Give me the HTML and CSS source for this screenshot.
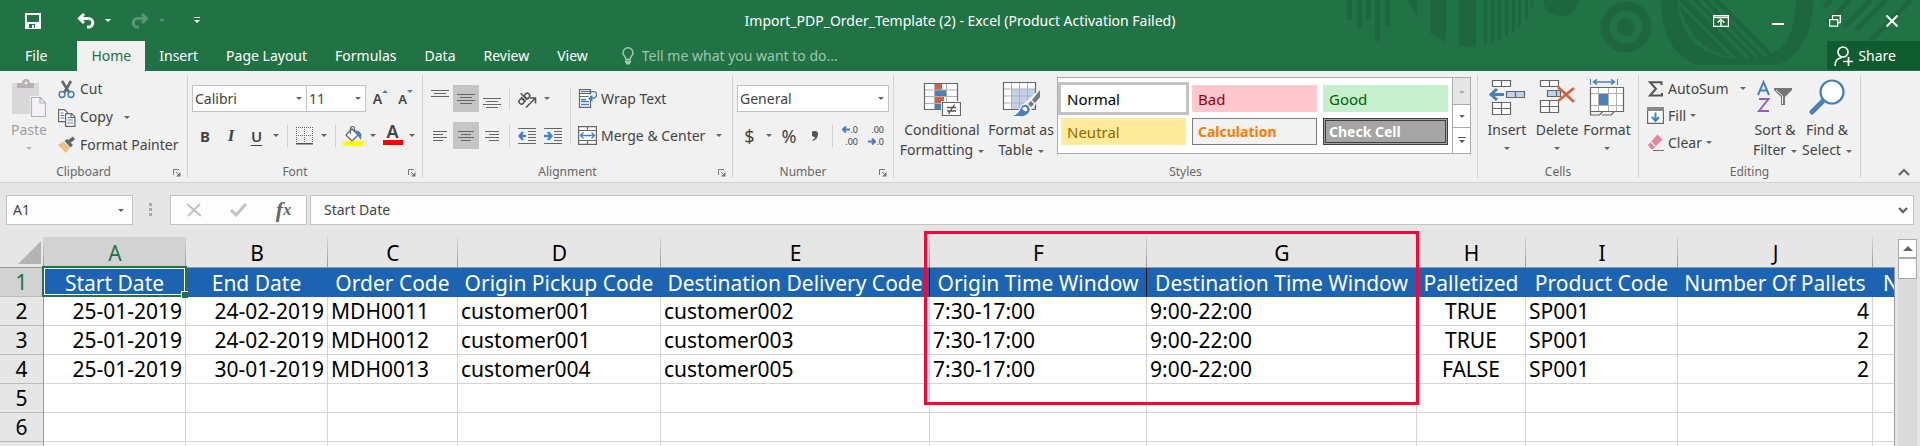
FILE: index.html
```html
<!DOCTYPE html>
<html lang="en">
<head>
<meta charset="utf-8">
<title>Import_PDP_Order_Template (2) - Excel</title>
<link rel="stylesheet" href="styles.css">
</head>
<body>
<header class="top">
  <svg class="pattern" width="580" height="71" viewBox="0 0 580 71" aria-hidden="true">
    <g fill="#1e663e">
      <path d="M7 0h5v20H7zM17 0h5v29h-5zM26 0h5v20h-5zM35 0h5v41h-5zM45 0h5v26h-5z"/>
      <path d="M68 0h9v18Q71 9 68 0zM90 0h16v42Q97 38 90 33zM119 0h17v47q-9 0-17-1zM144 0h3v45l-3 1zM151 0h3v43l-3 1zM158 0h3v40l-3 1zM165 0h3v36l-3 2zM172 0h3v31l-3 2zM178 0h3v25l-3 3zM185 0h3v17l-3 4zM191 0h3v4l-3 6z"/>
      <path d="M203 0h36q-3 16-18 16T203 0z"/>
      <circle cx="286" cy="27" r="9"/>
      <path d="M321 0q0 50 35 65h82q35-15 35-65h-17q0 59-50 59Q340 59 338 0z"/>
      <path d="M340 8V0h39l53 53q-9 5-18 6h-10Q354 56 340 8z"/>
    </g>
    <circle cx="286" cy="27" r="21" fill="none" stroke="#1e663e" stroke-width="9"/>
    <path d="M338 2l57 57M350 0l58 58M360 0l57 57M370 0l56 56" stroke="#217346" stroke-width="3"/>
    <path d="M484 7l7-7M487 23l23-23M504 27l27-27M516 30l30-30M530 41l41-41" stroke="#1e663e" stroke-width="5"/>
  </svg>
  <div class="titlebar">
    <div class="qat">
      <button class="q-save" aria-label="Save"><svg width="16" height="16" viewBox="0 0 16 16"><path d="M0 0h16v16H0zM2 2v7h12V2zM4 11v4h3v-3h2v3h1v-4z" fill="#fff" fill-rule="evenodd"/></svg></button>
      <button class="q-btn" aria-label="Undo"><svg width="18" height="16" viewBox="0 0 18 16"><path d="M7 1L2.500 5.500 7 10M3 5.500h8.500a4.300 4.300 0 0 1 0 8.600H10" fill="none" stroke="#fff" stroke-width="3"/></svg></button>
      <button class="q-caret" aria-label="Undo list"><i class="caret light"></i></button>
      <button class="q-btn faded" aria-label="Redo"><svg width="18" height="16" viewBox="0 0 18 16"><path d="M11 1l4.500 4.500L11 10M15 5.500H6.500a4.300 4.300 0 0 0 0 8.600H8" fill="none" stroke="#fff" stroke-width="3"/></svg></button>
      <button class="q-caret faded" aria-label="Redo list"><i class="caret light"></i></button>
      <button class="q-more" aria-label="Customize Quick Access Toolbar"><svg width="6" height="7" viewBox="0 0 6 7"><path d="M0 0h6v1H0zM0 3h6L3 6z" fill="#fff"/></svg></button>
    </div>
    <h1 class="title">Import_PDP_Order_Template (2) - Excel (Product Activation Failed)</h1>
    <div class="winctl">
      <button aria-label="Ribbon Display Options"><svg width="16" height="12" viewBox="0 0 16 12"><path d="M.5.5h15v11H.5zM0 2.500h16M8 11V5M4.500 7.500L8 4.500l3.500 3" fill="none" stroke="#fff" stroke-width="1.400"/></svg></button>
      <button aria-label="Minimize"><svg width="12" height="12" viewBox="0 0 12 12"><path d="M0 8h12v2H0z" fill="#fff"/></svg></button>
      <button aria-label="Restore Down"><svg width="12" height="12" viewBox="0 0 12 12"><path d="M.7 4.700h8v6.500h-8zM3.500 4.500V.700h7.800v7H9" fill="none" stroke="#fff" stroke-width="1.300"/></svg></button>
      <button aria-label="Close"><svg width="12" height="12" viewBox="0 0 12 12"><path d="M.5.500l11 11M11.500.500l-11 11" stroke="#fff" stroke-width="2"/></svg></button>
    </div>
  </div>
  <nav class="tabs">
    <a class="tab file" href="#file">File</a>
    <a class="tab active" href="#home">Home</a>
    <a class="tab" href="#insert">Insert</a>
    <a class="tab" href="#layout">Page Layout</a>
    <a class="tab" href="#formulas">Formulas</a>
    <a class="tab" href="#data">Data</a>
    <a class="tab" href="#review">Review</a>
    <a class="tab" href="#view">View</a>
    <label class="tell">
      <svg width="12" height="18" viewBox="0 0 12 18"><path d="M4 12.500C4 9.500 1 9 1 5.800a5 5 0 0 1 10 0C11 9 8 9.500 8 12.500z" fill="none" stroke="#9fc6ae" stroke-width="1.600"/><path d="M3 13.500h6V16H8v1.500H4V16H3z" fill="#9fc6ae"/></svg>
      <input type="text" placeholder="Tell me what you want to do..." aria-label="Tell me what you want to do">
    </label>
    <button class="share"><svg width="20" height="20" viewBox="0 0 20 20" fill="none" stroke="#fff" stroke-width="1.700"><circle cx="9" cy="6" r="5"/><path d="M1 20c0-5 2.500-8 7-8.500M9 15.500h10M14.500 11v9"/></svg>Share</button>
  </nav>
</header>

<section class="ribbon">
  <div class="group clipboard">
    <div class="body">
      <button class="big paste" disabled>
        <svg width="34" height="38" viewBox="0 0 34 38"><path d="M0 4h27v31H0z" fill="#dbd8db"/><path d="M5 9V4h5q0-4 4-4t4 4h4v5z" fill="#b5b1b5"/><circle cx="14" cy="4" r="1.500" fill="#f1f1f1"/><path d="M18 17h17v22H18z" fill="#f1f1f1"/><path d="M19.500 18.500h9l5 5.500v13.500h-14zM28 18.500V24h5.500" fill="#f5f1f8" stroke="#b5b1b5" stroke-width="1.200"/></svg>
        <span>Paste</span><i class="caret"></i>
      </button>
      <div class="stack pitch28">
        <button class="cmd"><svg width="18" height="20" viewBox="0 0 18 20"><path d="M4 2l7.500 12M13 2L6 14" stroke="#666" stroke-width="2.600"/><circle cx="4" cy="15.500" r="2.900" fill="none" stroke="#4a80ba" stroke-width="1.500"/><circle cx="13" cy="15.500" r="2.900" fill="none" stroke="#4a80ba" stroke-width="1.500"/></svg>Cut</button>
        <button class="cmd"><svg width="18" height="19" viewBox="0 0 18 19"><path d="M.600 1.600h6l3 3v9h-9z" fill="#fff" stroke="#666" stroke-width="1.200"/><path d="M2.500 5h3M2.500 7.500h4M2.500 10h4" stroke="#4a80ba"/><path d="M7.600 5.600h6l3.300 3.300v9.500H7.600zM13 6v3.500h3.500" fill="#fff" stroke="#666" stroke-width="1.200"/><path d="M9.500 9.500h2.500M9.500 12h5.500M9.500 15h5.500" stroke="#4a80ba"/></svg>Copy<i class="caret far"></i></button>
        <button class="cmd"><svg width="18" height="18" viewBox="0 0 18 18"><path d="M0 9l5-3.500 7 6L8 17z" fill="#eac282"/><path d="M6.500 5l2.500-2 6 6-2.500 2.500z" fill="#666"/><path d="M10.500 6l5.500-4" stroke="#666" stroke-width="3.500"/></svg>Format Painter</button>
      </div>
    </div>
    <div class="glabel">Clipboard<button class="launch" aria-label="Clipboard settings"><svg width="8" height="8" viewBox="0 0 8 8"><path d="M.5 6V.500H6M3 3l3 3" fill="none" stroke="#777"/><path d="M7.500 3v4.500H3z" fill="#777"/></svg></button></div>
  </div>

  <div class="group font">
    <div class="body rows">
      <div class="row">
        <select class="combo fontname" aria-label="Font"><option>Calibri</option></select><select class="combo fontsize" aria-label="Font size"><option>11</option></select>
        <button class="tool w25 grow" aria-label="Increase Font Size">A<svg width="6" height="3" viewBox="0 0 6 3"><path d="M0 3l3-3 3 3z" fill="#4a80ba"/></svg></button>
        <button class="tool w25 shrink" aria-label="Decrease Font Size">A<svg width="6" height="3" viewBox="0 0 6 3"><path d="M0 0h6L3 3z" fill="#4a80ba"/></svg></button>
      </div>
      <div class="row">
        <button class="tool w26 bold">B</button>
        <button class="tool w26 italic">I</button>
        <button class="tool w25 under">U</button>
        <button class="tool w14" aria-label="Underline styles"><i class="caret"></i></button>
        <i class="vsep"></i>
        <button class="tool w25" aria-label="Borders"><svg width="17" height="18" viewBox="0 0 17 18"><path d="M0 .5h17M.5 0v16M16.500 0v16M8.500 0v16M0 8.500h17" fill="none" stroke="#666" stroke-dasharray="1 1"/><path d="M0 16h17v1.500H0z" fill="#555"/></svg></button>
        <button class="tool w14" aria-label="Border styles"><i class="caret"></i></button>
        <i class="vsep"></i>
        <button class="tool w26" aria-label="Fill Color"><svg width="20" height="20" viewBox="0 0 20 20"><path d="M3 9l6-6 6 6-6 6z" fill="#fff" stroke="#666" stroke-width="1.300"/><path d="M7.500 8V2.500q0-2 2-2t2 2V5" fill="none" stroke="#666" stroke-width="1.200"/><path d="M12 4q6 1 6.500 5l-.5 5-3-4z" fill="#4a80ba"/><path d="M0 15h20v5H0z" fill="#ff0"/></svg></button>
        <button class="tool w14" aria-label="Fill colors"><i class="caret"></i></button>
        <button class="tool w25 fcolor" aria-label="Font Color">A</button>
        <button class="tool w14" aria-label="Font colors"><i class="caret"></i></button>
      </div>
    </div>
    <div class="glabel">Font<button class="launch" aria-label="Font settings"><svg width="8" height="8" viewBox="0 0 8 8"><path d="M.5 6V.500H6M3 3l3 3" fill="none" stroke="#777"/><path d="M7.500 3v4.500H3z" fill="#777"/></svg></button></div>
  </div>

  <div class="group align">
    <div class="body">
      <div class="rows">
        <div class="row">
          <button class="tool w26" aria-label="Top Align"><svg width="18" height="18" viewBox="0 0 18 18" stroke="#666"><path d="M0 .5h18M3 3.500h12M0 6.500h18"/></svg></button>
          <button class="tool w26 on" aria-label="Middle Align"><svg width="18" height="18" viewBox="0 0 18 18" stroke="#666"><path d="M0 4.500h18M3 7.500h12M0 10.500h18M3 13.500h12"/></svg></button>
          <button class="tool w26" aria-label="Bottom Align"><svg width="18" height="18" viewBox="0 0 18 18" stroke="#666"><path d="M0 8.500h18M3 11.500h12M0 14.500h18M3 17.500h12"/></svg></button>
          <i class="vsep"></i>
          <button class="tool w26" aria-label="Orientation"><svg width="20" height="20" viewBox="0 0 20 20" fill="none" stroke="#555" stroke-width="1.600"><g transform="rotate(-45 7 10)"><circle cx="3.500" cy="10" r="2.500"/><path d="M6.300 6.500v6.500"/><circle cx="11.500" cy="10" r="2.500"/><path d="M8.700 3.500v9.500"/></g><path d="M9 18.500l9-9M13 9h5.500v5.500"/></svg></button>
          <button class="tool w14" aria-label="Orientation options"><i class="caret"></i></button>
        </div>
        <div class="row">
          <button class="tool w26" aria-label="Align Left"><svg width="14" height="12" viewBox="0 0 14 12" stroke="#666"><path d="M0 1.500h14M0 4.500h10M0 7.500h14M0 10.500h10"/></svg></button>
          <button class="tool w26 on" aria-label="Center"><svg width="16" height="12" viewBox="0 0 16 12" stroke="#666"><path d="M0 1.500h16M3 4.500h10M0 7.500h16M3 10.500h10"/></svg></button>
          <button class="tool w26" aria-label="Align Right"><svg width="14" height="12" viewBox="0 0 14 12" stroke="#666"><path d="M0 1.500h14M4 4.500h10M0 7.500h14M4 10.500h10"/></svg></button>
          <i class="vsep"></i>
          <button class="tool w26" aria-label="Decrease Indent"><svg width="18" height="16" viewBox="0 0 18 16"><path d="M0 .5h18M10 3.500h8M10 6.500h8M10 9.500h8M10 12.500h8M0 15.500h18" stroke="#666"/><path d="M8 8H2M5 4L1.500 8 5 12" fill="none" stroke="#4a80ba" stroke-width="2.400"/></svg></button>
          <button class="tool w26" aria-label="Increase Indent"><svg width="18" height="16" viewBox="0 0 18 16"><path d="M0 .5h18M10 3.500h8M10 6.500h8M10 9.500h8M10 12.500h8M0 15.500h18" stroke="#666"/><path d="M0 8h6M4 4l3.500 4L4 12" fill="none" stroke="#4a80ba" stroke-width="2.400"/></svg></button>
        </div>
      </div>
      <i class="vsep tall"></i>
      <div class="rows wide">
        <div class="row"><button class="cmd"><svg width="19" height="19" viewBox="0 0 19 19"><path d="M1.500.600h11v3.900h-11zM12.500 7v11.400h-11V4.500M1.500 7.500h9" fill="#fff" stroke="#666" stroke-width="1.200"/><path d="M3 2.600h13q2.500 0 2.500 3T16 9h-3M3 10.500h5M3 12.500h8M3 15.500h8" fill="none" stroke="#4a80ba" stroke-width="1.300"/><path d="M10 9.500l4.500-3.500v7z" fill="#4a80ba"/></svg>Wrap Text</button></div>
        <div class="row"><button class="cmd"><svg width="19" height="19" viewBox="0 0 19 19"><path d="M.600.600h17.800v17.800H.600zM.600 4.500h17.800M.600 14.500h17.800M9.500.600v3.900M9.500 14.500v3.900" fill="#fff" stroke="#666" stroke-width="1.200"/><path d="M3 9.500h13M5.500 6.500l-3 3 3 3M13.500 6.500l3 3-3 3" fill="none" stroke="#4a80ba" stroke-width="1.400"/></svg>Merge &amp; Center<i class="caret far"></i></button></div>
      </div>
    </div>
    <div class="glabel">Alignment<button class="launch" aria-label="Alignment settings"><svg width="8" height="8" viewBox="0 0 8 8"><path d="M.5 6V.500H6M3 3l3 3" fill="none" stroke="#777"/><path d="M7.500 3v4.500H3z" fill="#777"/></svg></button></div>
  </div>

  <div class="group number">
    <div class="body rows">
      <div class="row"><select class="combo numfmt" aria-label="Number format"><option>General</option></select></div>
      <div class="row">
        <button class="tool w25 sym">$</button>
        <button class="tool w14" aria-label="Currency formats"><i class="caret"></i></button>
        <button class="tool w26 sym">%</button>
        <button class="tool w26" aria-label="Comma Style"><svg width="6" height="10" viewBox="0 0 6 10"><path d="M3 0a3 3 0 0 1 3 3q0 5-5 7l-.500-1Q3 8 3.200 5.800A3 3 0 1 1 3 0z" fill="#555"/></svg></button>
        <i class="vsep"></i>
        <button class="tool w26 dec" aria-label="Increase Decimal"><span><svg width="8" height="7" viewBox="0 0 8 7"><path d="M8 3.500H2M4 .500l-3 3 3 3" fill="none" stroke="#4a80ba" stroke-width="2"/></svg>.0</span><span>.00</span></button>
        <button class="tool w26 dec" aria-label="Decrease Decimal"><span>.00</span><span><svg width="8" height="7" viewBox="0 0 8 7"><path d="M0 3.500h6M4 .500l3 3-3 3" fill="none" stroke="#4a80ba" stroke-width="2"/></svg>.0</span></button>
      </div>
    </div>
    <div class="glabel">Number<button class="launch" aria-label="Number settings"><svg width="8" height="8" viewBox="0 0 8 8"><path d="M.5 6V.500H6M3 3l3 3" fill="none" stroke="#777"/><path d="M7.500 3v4.500H3z" fill="#777"/></svg></button></div>
  </div>

  <div class="group styles">
    <div class="body">
      <button class="big cond">
        <svg width="38" height="38" viewBox="0 0 38 38"><path d="M1 4h34v27H1z" fill="#fff"/><path d="M11 4h8v7h-8zM11 18h10v6H11z" fill="#d9603f"/><path d="M11 11h12v7H11zM11 24h7v7h-7z" fill="#4a80ba"/><path d="M11.500 4v27M23.500 4v27M1 11h34M1 17.500h34M1 24.500h34" stroke="#b1b1b1" fill="none"/><path d="M1.500 4.500h33v26h-33z" fill="none" stroke="#666" stroke-width="1.200"/><path d="M18 22h20v16H18z" fill="#f1f1f1"/><path d="M19.500 23.500h18v13h-18z" fill="#fff" stroke="#666" stroke-width="1.200"/><path d="M24 28.500h9M24 32h9M31.500 25.500l-6 9.500" stroke="#555" stroke-width="1.300"/></svg>
        <span>Conditional</span><span>Formatting<i class="caret near"></i></span>
      </button>
      <button class="big fmt">
        <svg width="38" height="38" viewBox="0 0 38 38"><path d="M1 3h32v28H1z" fill="#fff"/><path d="M9 10h24v21H9z" fill="#c0d3e9"/><path d="M9.500 3v28M17.500 3v28M25.500 3v28M1 10h32M1 17h32M1 24h32" stroke="#b1b1b1" fill="none"/><path d="M1.500 3.500h32v27h-32z" fill="none" stroke="#666" stroke-width="1.200"/><path d="M38 10L20 26l-9 12h12l7-8 8-10z" fill="#f1f1f1"/><path d="M38 11v7l-5 6-3-3zM29 22l3 3-3 3-3-3z" fill="#777"/><path d="M11 37q6-2 8-8 2-4 6-3 4 3 2 7-3 5-10 4z" fill="#4a80ba"/><path d="M20 30q3-4 5-1 1 4-2 3" fill="#fff"/></svg>
        <span>Format as</span><span>Table<i class="caret near"></i></span>
      </button>
      <div class="gallery">
        <div class="swatches">
          <button class="sw normal">Normal</button><button class="sw bad">Bad</button><button class="sw good">Good</button>
          <button class="sw neutral">Neutral</button><button class="sw calc">Calculation</button><button class="sw check">Check Cell</button>
        </div>
        <div class="gscroll">
          <button disabled aria-label="Previous row"><i class="caret up"></i></button>
          <button aria-label="Next row"><i class="caret"></i></button>
          <button aria-label="More styles"><svg width="8" height="7" viewBox="0 0 8 7"><path d="M0 0h8v1H0zM1 3h6L4 6z" fill="#555"/></svg></button>
        </div>
      </div>
    </div>
    <div class="glabel">Styles</div>
  </div>

  <div class="group cells">
    <div class="body">
      <button class="big w50">
        <svg width="38" height="38" viewBox="0 0 38 38"><path d="M4.500 1.500h18v6h-18zM13.500 1.500v6M4.500 23.500h18v12h-18zM13.500 23.500v12M4.500 29.500h18" fill="#fff" stroke="#666" stroke-width="1.200"/><path d="M18.500 12.500h18v6h-18zM27.500 12.500v6" fill="#c0d3e9" stroke="#666" stroke-width="1.200"/><path d="M16 15.500H3M9 10l-6 5.500L9 21" fill="none" stroke="#4a80ba" stroke-width="3"/></svg>
        <span>Insert</span><i class="caret"></i>
      </button>
      <button class="big w50">
        <svg width="38" height="38" viewBox="0 0 38 38"><path d="M2.500 1.500h18v6h-18zM11.500 1.500v6M2.500 21.500h18v12h-18zM11.500 21.500v12M2.500 27.500h18" fill="#fff" stroke="#666" stroke-width="1.200"/><path d="M9.500 11.500h13v6h-13zM18.500 11.500v6" fill="#c0d3e9" stroke="#666" stroke-width="1.200"/><path d="M20 8l16 15M36 9L20 22" stroke="#d9603f" stroke-width="2.600"/></svg>
        <span>Delete</span><i class="caret"></i>
      </button>
      <button class="big w50">
        <svg width="38" height="38" viewBox="0 0 38 38"><path d="M2.500 0v6M29.500 0v6" stroke="#4a80ba"/><path d="M6 3h20M9 .500L5.500 3 9 5.500M23 .500L26.500 3 23 5.500" fill="none" stroke="#4a80ba" stroke-width="1.500"/><path d="M2.500 8.500h33v24h-33z" fill="#fff"/><path d="M10.500 8v24M20.500 8v24M28.500 8v24M2 14.500h33M2 26.500h33" stroke="#b1b1b1"/><path d="M11 15h9v11h-9z" fill="#4a80ba"/><path d="M2.500 8.500h33v24h-33zM2.500 33v3h9l3-3M14 36h9l3-3" fill="none" stroke="#666" stroke-width="1.200"/></svg>
        <span>Format</span><i class="caret"></i>
      </button>
    </div>
    <div class="glabel">Cells</div>
  </div>

  <div class="group editing">
    <div class="body">
      <div class="stack pitch27">
        <button class="cmd"><svg width="17" height="16" viewBox="0 0 17 16"><path d="M14.500 4V1.200H3l6 6.500L3 14.600h12V12" fill="none" stroke="#555" stroke-width="2"/></svg>AutoSum<i class="caret far"></i></button>
        <button class="cmd"><svg width="17" height="17" viewBox="0 0 17 17"><path d="M.600.600h15.800v15.800H.600z" fill="#fff" stroke="#666" stroke-width="1.200"/><path d="M0 0h17v4H0z" fill="#888"/><path d="M8.500 5.500v8M5 10l3.500 4 3.500-4" fill="none" stroke="#4a80ba" stroke-width="2"/></svg>Fill<i class="caret"></i></button>
        <button class="cmd"><svg width="17" height="17" viewBox="0 0 17 17"><path d="M10.500.500l5 5L6 15H4l-3-4z" fill="#e5849a"/><path d="M3.500 7.500l5 5" stroke="#f1f1f1" stroke-width="1.300"/><path d="M6 16.500h11" stroke="#777"/></svg>Clear<i class="caret"></i></button>
      </div>
      <button class="big w54">
        <svg width="38" height="38" viewBox="0 0 38 38"><path d="M2 16L7.500 3 13 16M4 11.500h7" fill="none" stroke="#4a80ba" stroke-width="2"/><path d="M3 20h9.500L3 32h10" fill="none" stroke="#9762b5" stroke-width="2"/><path d="M18 9h18v2l-7 7v8h-4v-8l-7-7z" fill="#777"/><path d="M20 11l6.500 6v8" fill="none" stroke="#eee"/></svg>
        <span>Sort &amp;</span><span>Filter<i class="caret near"></i></span>
      </button>
      <button class="big w50">
        <svg width="38" height="38" viewBox="0 0 38 38"><path d="M15 22L4 33" stroke="#4a80ba" stroke-width="5" stroke-linecap="round"/><circle cx="24" cy="13" r="11.500" fill="#fff" stroke="#4a80ba" stroke-width="2.200"/></svg>
        <span>Find &amp;</span><span>Select<i class="caret near"></i></span>
      </button>
    </div>
    <div class="glabel">Editing</div>
  </div>
  <button class="collapse" aria-label="Collapse the Ribbon"><svg width="12" height="8" viewBox="0 0 12 8"><path d="M1 7l5-5 5 5" fill="none" stroke="#666" stroke-width="2"/></svg></button>
</section>

<section class="fbar">
  <select class="combo namebox" aria-label="Name Box"><option>A1</option></select>
  <svg class="dots" width="4" height="14" viewBox="0 0 4 14"><path d="M0 0h3v3H0zM0 5h3v3H0zM0 10h3v3H0z" fill="#aaa"/></svg>
  <div class="fbtns">
    <button aria-label="Cancel"><svg width="16" height="14" viewBox="0 0 16 14"><path d="M1 1l14 12M14 1L2 13" stroke="#c3c3c3" stroke-width="2"/></svg></button>
    <button aria-label="Enter"><svg width="17" height="14" viewBox="0 0 17 14"><path d="M1 7l5 5L16 1" fill="none" stroke="#c3c3c3" stroke-width="3"/></svg></button>
    <button class="fx" aria-label="Insert Function">f<small>x</small></button>
  </div>
  <label class="formula"><input type="text" value="Start Date" aria-label="Formula"><svg width="10" height="7" viewBox="0 0 10 7"><path d="M1 1l4 4 4-4" fill="none" stroke="#666" stroke-width="2.400"/></svg></label>
</section>

<main class="workbook">
  <div class="sheet">
    <table class="grid">
      <colgroup><col class="c-n"><col class="c-a"><col class="c-b"><col class="c-c"><col class="c-d"><col class="c-e"><col class="c-f"><col class="c-g"><col class="c-h"><col class="c-i"><col class="c-j"><col></colgroup>
      <thead><tr><td class="corner"><svg width="23" height="23" viewBox="0 0 23 23"><path d="M23 0v23H0z" fill="#b3b3b3"/></svg></td><th class="sel">A</th><th>B</th><th>C</th><th>D</th><th>E</th><th>F</th><th>G</th><th>H</th><th>I</th><th>J</th><th></th></tr></thead>
      <tbody>
        <tr class="head"><th class="sel">1</th><td class="cur">Start Date<span class="cursor"></span></td><td>End Date</td><td>Order Code</td><td>Origin Pickup Code</td><td class="dark">Destination Delivery Code</td><td class="dark">Origin Time Window</td><td>Destination Time Window</td><td>Palletized</td><td>Product Code</td><td>Number Of Pallets</td><td class="cut">N</td></tr>
        <tr><th>2</th><td class="r">25-01-2019</td><td class="r">24-02-2019</td><td>MDH0011</td><td>customer001</td><td>customer002</td><td>7:30-17:00</td><td>9:00-22:00</td><td class="m">TRUE</td><td>SP001</td><td class="r">4</td><td></td></tr>
        <tr><th>3</th><td class="r">25-01-2019</td><td class="r">24-02-2019</td><td>MDH0012</td><td>customer001</td><td>customer003</td><td>7:30-17:00</td><td>9:00-22:00</td><td class="m">TRUE</td><td>SP001</td><td class="r">2</td><td></td></tr>
        <tr><th>4</th><td class="r">25-01-2019</td><td class="r">30-01-2019</td><td>MDH0013</td><td>customer004</td><td>customer005</td><td>7:30-17:00</td><td>9:00-22:00</td><td class="m">FALSE</td><td>SP001</td><td class="r">2</td><td></td></tr>
        <tr><th>5</th><td></td><td></td><td></td><td></td><td></td><td></td><td></td><td></td><td></td><td></td><td></td></tr>
        <tr><th>6</th><td></td><td></td><td></td><td></td><td></td><td></td><td></td><td></td><td></td><td></td><td></td></tr>
        <tr><th></th><td></td><td></td><td></td><td></td><td></td><td></td><td></td><td></td><td></td><td></td><td></td></tr>
      </tbody>
    </table>
  </div>
  <div class="vscroll"><button aria-label="Scroll up"><i class="caret up big-up"></i></button><div class="thumb"></div></div>
  <div class="marker"></div>
</main>
</body>
</html>
```
FILE: styles.css
```css
* { box-sizing: border-box; }
html, body { height: 100%; }
body {
  margin: 0;
  display: flex;
  flex-direction: column;
  overflow: hidden;
  background: #e6e6e6;
  color: #444;
  font: 14px/20px "Noto Sans", sans-serif;
}
button, input, select {
  font: inherit;
  color: inherit;
  background: none;
  border: 0;
  margin: 0;
  padding: 0;
  border-radius: 0;
}
button { display: flex; align-items: center; justify-content: center; }
svg { display: block; flex: none; }

.caret {
  display: inline-block;
  flex: none;
  border: 3px solid transparent;
  border-top-color: #666;
  border-bottom-width: 0;
}
.caret.light { border-top-color: #fff; }
.caret.up { border-bottom: 3px solid #aaa; border-top-width: 0; }
.caret.big-up { border-width: 0 5px 5px; border-bottom-color: #666; }
.caret.near { margin-left: 5px; vertical-align: middle; }
.caret.far { margin-left: 7px; }

/* Title bar and tabs */
.top { position: relative; background: #217346; color: #fff; flex: none; }
.pattern { position: absolute; top: 0; right: 0; }
.titlebar {
  position: relative;
  display: grid;
  grid-template-columns: 1fr auto 1fr;
  align-items: center;
  height: 41px;
}
.qat { display: flex; align-items: center; padding-left: 20px; }
.q-save { width: 26px; height: 34px; margin-right: 28px; }
.q-btn { width: 24px; height: 34px; }
.q-caret { width: 20px; height: 34px; margin-right: 10px; }
.q-more { width: 20px; height: 34px; margin-left: 5px; }
.faded { opacity: .25; }
.title { margin: 0; font-size: 14px; font-weight: 400; }
.winctl { display: flex; justify-content: flex-end; }
.winctl button { width: 57px; height: 38px; }
.tabs { position: relative; display: flex; height: 30px; }
.tab {
  display: flex;
  align-items: center;
  padding: 0 14px;
  color: #fff;
  text-decoration: none;
}
.tab.file { padding: 0 30px 0 25px; }
.tab.active { background: #f1f1f1; color: #217346; }
.tell { display: flex; align-items: center; gap: 8px; padding-left: 20px; }
.tell input { width: 260px; outline: 0; }
.tell input::placeholder { color: #9fc6ae; opacity: 1; }
.share {
  margin: 0 0 1px auto;
  padding: 0 24px 0 7px;
  gap: 4px;
  background: #0f5c30;
}

/* Ribbon */
.ribbon {
  display: flex;
  flex: none;
  padding: 4px 0;
  background: #f1f1f1;
  border-bottom: 1px solid #d2d2d2;
}
.group {
  display: flex;
  flex: none;
  flex-direction: column;
  border-right: 1px solid #d2d2d2;
}
.clipboard { width: 188px; }
.font { width: 235px; }
.align { width: 310px; }
.number { width: 161px; }
.styles { width: 584px; }
.cells { width: 161px; }
.editing { width: 222px; }
.body { display: flex; height: 91px; padding-left: 4px; }
.glabel {
  position: relative;
  height: 12px;
  text-align: center;
  font-size: 12px;
  line-height: 12px;
  color: #666;
  padding-right: 20px;
}
.styles .glabel, .cells .glabel, .editing .glabel { padding-right: 0; }
.launch { position: absolute; right: 6px; top: 2px; height: 10px; }
.row { display: flex; align-items: center; height: 27px; }
.rows { display: flex; flex-direction: column; gap: 10px; padding-top: 10px; }
.stack { display: flex; flex-direction: column; }
.stack .cmd { height: 28px; }
.pitch27 .cmd { height: 27px; }
.cmd { justify-content: flex-start; gap: 4px; white-space: nowrap; }
.big {
  flex-direction: column;
  justify-content: flex-start;
  padding-top: 4px;
  white-space: nowrap;
}
.big svg { margin-bottom: 3px; }
.big span { line-height: 20px; }
.big > .caret { margin-top: 7px; }
.w50 { width: 50px; }
.w54 { width: 54px; }
.paste { width: 34px; margin: 0 12px 0 8px; color: #a0a0a0; }
.paste .caret { border-top-color: #bbb; }
.tool { flex: none; height: 27px; }
.w14 { width: 14px; }
.w25 { width: 25px; }
.w26 { width: 26px; }
.on { background: #c5c5c5; }
.vsep { flex: none; width: 1px; height: 22px; margin: 0 4px; background: #d2d2d2; }
.vsep.tall { height: 55px; margin: 14px 7px 0 4px; }
.combo {
  appearance: none;
  height: 27px;
  padding: 0 2px;
  border: 1px solid #c3c3c3;
  color: #444;
  background: #fff url("data:image/svg+xml,%3Csvg xmlns='http://www.w3.org/2000/svg' width='6' height='3'%3E%3Cpath d='M0 0h6L3 3z' fill='%23666'/%3E%3C/svg%3E") no-repeat right 4px center;
}
.fontname { width: 115px; }
.fontsize { width: 60px; margin: 0 2px 0 -1px; }
.numfmt { width: 152px; }
.grow, .shrink { font-weight: 600; align-items: center; }
.grow svg, .shrink svg { margin-bottom: 14px; }
.shrink { font-size: 13px; }
.bold, .under { font-weight: 700; font-size: 15px; }
.italic { font: italic 700 17px "Liberation Serif", serif; }
.under { text-decoration: underline; text-underline-offset: 3px; font-weight: 600; }
.fcolor {
  font-weight: 600;
  font-size: 18px;
  line-height: 14px;
  background: linear-gradient(#f00, #f00) no-repeat center bottom 4px / 20px 5px;
  padding-bottom: 9px;
}
.wide { flex: 1; }
.sym { font-size: 18px; }
.dec { flex-direction: column; font-size: 9px; line-height: 12px; align-items: flex-end; padding-right: 5px; }
.dec span { display: flex; align-items: center; }
.cond { width: 84px; margin-left: 2px; }
.fmt { width: 68px; margin: 0 2px 0 3px; }
.gallery {
  display: flex;
  height: 77px;
  margin-top: 2px;
  background: #fff;
  border: 1px solid #ababab;
}
.swatches {
  display: grid;
  grid-template-columns: repeat(3, 125px);
  grid-auto-rows: 27px;
  gap: 6px;
  padding: 7px 3px;
}
.sw { justify-content: flex-start; padding-left: 6px; font-size: 15px; }
.normal { background: #fff; color: #000; outline: 3px solid #c3c3c3; }
.bad { background: #ffc7ce; color: #9c0006; }
.good { background: #c6efce; color: #006100; }
.neutral { background: #ffeb9c; color: #9c6500; }
.calc { background: #f2f2f2; color: #fa7d00; border: 1px solid #7f7f7f; font-weight: 700; padding-left: 5px; font-size: 14px; }
.check { background: #a5a5a5; color: #fff; border: 3px double #3f3f3f; font-weight: 700; padding-left: 3px; font-size: 14px; }
.gscroll { display: grid; grid-template-rows: 26px 23px 1fr; width: 18px; border-left: 1px solid #ababab; margin-left: 1px; }
.gscroll button + button { border-top: 1px solid #ababab; }
.gscroll button:disabled { background: #e6e6e6; }
.pitch27 { width: 105px; padding: 0 0 0 4px; }
.collapse { margin: 92px 10px 0 auto; height: 10px; }

/* Formula bar */
.fbar { display: flex; flex: none; align-items: center; height: 54px; padding: 0 6px; }
.fbar .combo { width: 127px; height: 30px; padding: 0 6px; background-position: right 8px center; background-color: #fdfdfd; }
.dots { margin: 0 17px 0 16px; }
.fbtns { display: flex; width: 137px; height: 30px; margin-right: 3px; background: #fdfdfd; border: 1px solid #c3c3c3; }
.fbtns button { flex: 1; }
.fx { font: italic 700 22px "Liberation Serif", serif; color: #666; }
.fx small { font-size: 16px; }
.formula { display: flex; flex: 1; align-items: center; height: 30px; padding: 0 5px 0 13px; background: #fdfdfd; border: 1px solid #c3c3c3; }
.formula input { flex: 1; outline: 0; }

/* Worksheet */
.workbook { position: relative; display: flex; flex: 1; min-height: 0; }
.sheet { flex: 1; overflow: hidden; }
.grid {
  width: 100%;
  table-layout: fixed;
  border-spacing: 0;
  color: #000;
  font-size: 21px;
  line-height: 28px;
}
.c-n { width: 44px; }
.c-a, .c-b { width: 142px; }
.c-c { width: 130px; }
.c-d { width: 203px; }
.c-e { width: 269px; }
.c-f { width: 217px; }
.c-g { width: 270px; }
.c-h { width: 109px; }
.c-i { width: 152px; }
.c-j { width: 195px; }
.grid th, .grid td { height: 29px; padding: 0 3px; white-space: nowrap; }
.grid th { font-weight: 400; }
.grid thead th, .grid thead td { height: 31px; border-bottom: 1px solid #999; }
.grid thead th {
  padding-top: 2px;
  background: linear-gradient(#d8d8d8, #999) no-repeat right / 1px 100%;
}
.grid thead th:last-child { background: none; }
.grid thead th.sel { background-color: #d2d2d2; color: #217346; }
.grid .corner { padding: 0 3px 0 0; background: linear-gradient(#d8d8d8, #999) no-repeat right / 1px 100%; }
.corner svg { margin-left: auto; }
.grid tbody th { border-right: 1px solid #999; border-bottom: 1px solid #bbb; }
.grid tbody th.sel { background: #d2d2d2; color: #217346; }
.grid tbody td { background: #fff; border-right: 1px solid #d4d4d4; border-bottom: 1px solid #d4d4d4; }
.grid tbody td:last-child { border-right-color: #999; }
.grid .r { text-align: right; }
.grid .m { text-align: center; }
.grid .head td { background: #1c64b1; border-color: #1c64b1; color: #fff; text-align: center; padding: 2px 0 0; line-height: 26px; }
.grid .head td.dark { border-right-color: #111; }
.grid .head .cut { text-align: left; padding-left: 10px; overflow: hidden; text-overflow: clip; }
.cur { position: relative; }
.cursor { position: absolute; inset: -2px -2px -1px -2px; border: 2px solid #217346; outline: 1px solid #fff; outline-offset: -3px; }
.cursor::after { content: ""; position: absolute; right: -3px; bottom: -3px; width: 6px; height: 6px; background: #217346; border: solid #fff; border-width: 1px 0 0 1px; }
.vscroll { flex: none; width: 19px; margin: 2px 3px 0; background: #dadada; }
.vscroll button, .thumb { width: 100%; height: 19px; background: #fff; border: 1px solid #ababab; }
.thumb { height: 21px; }
.marker { position: absolute; left: 924px; top: -6px; width: 495px; height: 174px; border: 3px solid #ff0039; }
```
